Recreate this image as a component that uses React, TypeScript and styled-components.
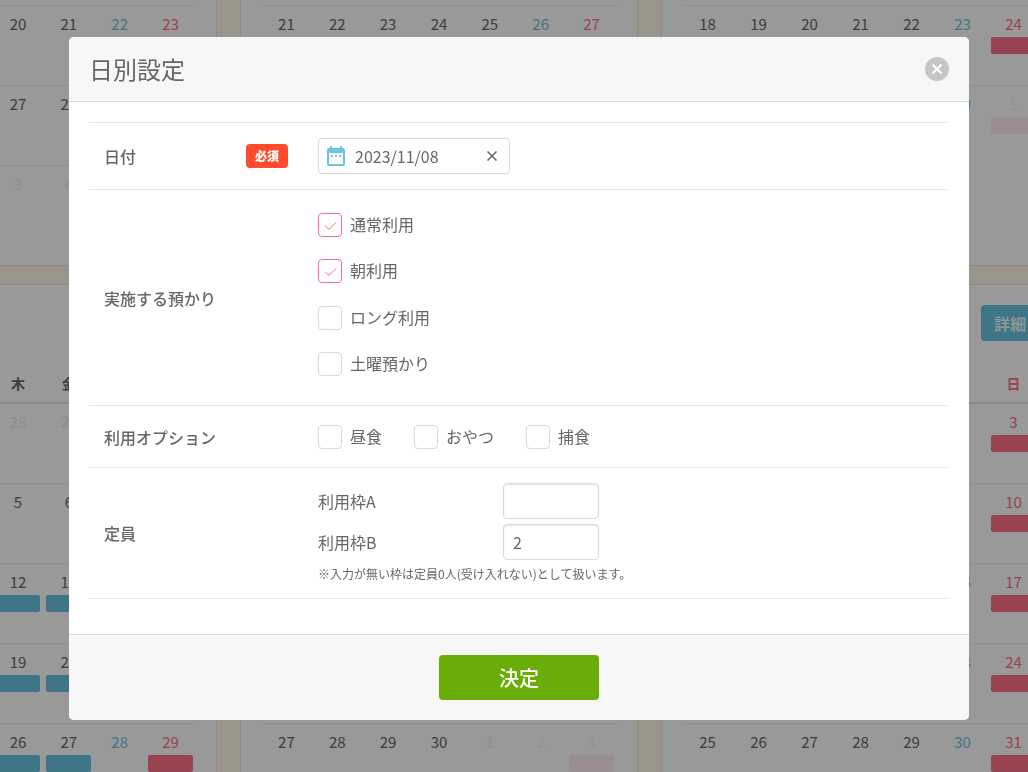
import React, { useState } from 'react';
import styled, { createGlobalStyle } from 'styled-components';
import { MdDateRange } from 'react-icons/md';

const BLUE = '#69c5e1';
const RED = '#fd7089';

const GlobalStyle = createGlobalStyle`
  *, *::before, *::after { box-sizing: border-box; }
  html, body { height: 100%; }
  body {
    margin: 0;
    overflow: hidden;
    background: #fff8e8;
    color: #666;
    font-family: "Noto Sans CJK JP", "Noto Sans", sans-serif;
    font-size: 16px;
    line-height: 24px;
  }
  button, input { font: inherit; color: inherit; }
`;

/* ---------- calendar behind the dialog ---------- */

const Year = styled.main`
  display: grid;
  grid-template-columns: 398px 398px 399px;
  gap: 18px 23px;
  height: 100vh;
  margin-left: -181px;
  overflow: hidden;
  align-content: start;
`;

const MonthCard = styled.section<{ $continued?: boolean }>`
  padding: ${(p) => (p.$continued ? '5px 20px 20px' : '20px')};
  background: #fff;
  border: 1px solid #ece6d8;
  border-top-width: ${(p) => (p.$continued ? '0' : '1px')};
`;

const MonthHead = styled.header`
  display: flex;
  justify-content: flex-end;
  margin-bottom: 23px;
`;

const DetailButton = styled.button`
  height: 36px;
  padding: 0 13px;
  border: 0;
  border-radius: 4px;
  background: ${BLUE};
  color: #fff;
  font-weight: 500;
`;

const MonthTable = styled.table`
  width: 100%;
  table-layout: fixed;
  border-spacing: 0;
  font-size: 15px;
  line-height: 22px;
`;

const dayColor = (col: number) => (col === 5 ? BLUE : col === 6 ? RED : '#666');

const WeekdayCell = styled.th<{ $col: number }>`
  height: 40px;
  padding: 0;
  border-bottom: 2px solid #e4e4e4;
  color: ${(p) => dayColor(p.$col)};
  font-size: 14px;
  font-weight: 700;
`;

const DayCell = styled.td<{ $col: number; $first: boolean }>`
  height: ${(p) => (p.$first ? '79px' : '80px')};
  padding: 7px 3px 0;
  border-top: ${(p) => (p.$first ? '0' : '1px solid #eee')};
  color: ${(p) => dayColor(p.$col)};
  text-align: center;
  vertical-align: top;
`;

const DayContent = styled.div<{ $outside: boolean }>`
  opacity: ${(p) => (p.$outside ? 0.12 : 1)};
`;

const Bar = styled.div<{ $color: string }>`
  height: 17px;
  margin-top: 2px;
  border-radius: 2px;
  background: ${(p) => p.$color};
`;

const WEEKDAYS = ['月', '火', '水', '木', '金', '土', '日'];

type Month = {
  name: string;
  lead: number;
  start: number;
  length: number;
  weeks: number;
  open?: number[];
  closed?: number[];
  continued?: boolean;
};

/* `start` is the first day number in the first listed row, `lead` the days of
   the previous month that come before it. Bars are keyed by cell index. */
const MONTHS: Month[] = [
  { name: '7月', lead: 0, start: 17, length: 31, weeks: 3, continued: true },
  { name: '8月', lead: 0, start: 21, length: 31, weeks: 2, continued: true },
  { name: '9月', lead: 0, start: 18, length: 30, weeks: 2, continued: true, closed: [6, 13] },
  { name: '10月', lead: 6, start: 1, length: 31, weeks: 5, open: [17, 18, 24, 25, 31, 32], closed: [6, 13, 20, 27, 34] },
  { name: '11月', lead: 2, start: 1, length: 30, weeks: 5, closed: [6, 13, 20, 27, 34] },
  { name: '12月', lead: 4, start: 1, length: 31, weeks: 5, closed: [6, 13, 20, 27, 34] },
];

const PREVIOUS_LENGTH: Record<string, number> = { '10月': 30, '11月': 31, '12月': 30 };

function dayAt(month: Month, index: number) {
  if (index < month.lead) {
    return { day: PREVIOUS_LENGTH[month.name] - month.lead + 1 + index, outside: true };
  }
  const day = month.start + index - month.lead;
  return day > month.length ? { day: day - month.length, outside: true } : { day, outside: false };
}

function MonthView({ month }: { month: Month }) {
  return (
    <MonthCard $continued={month.continued} aria-label={month.name}>
      {!month.continued && (
        <MonthHead>
          <DetailButton type="button">詳細</DetailButton>
        </MonthHead>
      )}
      <MonthTable>
        {!month.continued && (
          <thead>
            <tr>
              {WEEKDAYS.map((name, col) => (
                <WeekdayCell key={name} $col={col} scope="col">{name}</WeekdayCell>
              ))}
            </tr>
          </thead>
        )}
        <tbody>
          {Array.from({ length: month.weeks }, (_, week) => (
            <tr key={week}>
              {WEEKDAYS.map((name, col) => {
                const index = week * 7 + col;
                const { day, outside } = dayAt(month, index);
                return (
                  <DayCell key={name} $col={col} $first={week === 0 && !month.continued}>
                    <DayContent $outside={outside}>
                      {day}
                      {month.open?.includes(index) && <Bar $color={BLUE} />}
                      {month.closed?.includes(index) && <Bar $color={RED} />}
                    </DayContent>
                  </DayCell>
                );
              })}
            </tr>
          ))}
        </tbody>
      </MonthTable>
    </MonthCard>
  );
}

/* ---------- dialog ---------- */

const Overlay = styled.div`
  position: fixed;
  inset: 0;
  display: flex;
  justify-content: center;
  align-items: flex-start;
  padding: 37px 0 0 10px;
  overflow: auto;
  background: rgba(0, 0, 0, 0.4);
`;

const Dialog = styled.form`
  width: 100%;
  max-width: 900px;
  overflow: hidden;
  border-radius: 5px;
  background: #fff;
`;

const DialogHead = styled.header`
  display: flex;
  align-items: center;
  justify-content: space-between;
  height: 65px;
  padding: 0 20px;
  border-bottom: 1px solid #d9d9d9;
  background: #f7f7f7;
`;

const Title = styled.h1`
  margin: 0;
  font-size: 24px;
  line-height: 36px;
  font-weight: 400;
`;

const CloseButton = styled.button`
  display: grid;
  place-items: center;
  width: 24px;
  height: 24px;
  padding: 0;
  border: 0;
  border-radius: 50%;
  background: #c6c6c6;
`;

const DialogBody = styled.div`
  padding: 20px 20px 35px;
`;

const Row = styled.div`
  display: grid;
  grid-template-columns: 214px 1fr;
  align-items: center;
  border-bottom: 1px solid #e8e8e8;

  &:first-child { border-top: 1px solid #e8e8e8; }
`;

const RowLabel = styled.div`
  display: flex;
  align-items: center;
  justify-content: space-between;
  padding: 0 15px;
  font-weight: 500;
`;

const Required = styled.span`
  padding: 0 9px;
  border-radius: 4px;
  background: #ff4b2d;
  color: #fff;
  font-size: 12px;
  font-weight: 900;
`;

const RowContent = styled.div`
  padding: 15px;
`;

const DateField = styled.div`
  display: flex;
  align-items: center;
  gap: 7px;
  width: 192px;
  height: 36px;
  padding: 0 10px 0 5px;
  border: 1px solid #d9d9d9;
  border-radius: 4px;
`;

const CalendarIcon = styled(MdDateRange)`
  flex: none;
  color: ${BLUE};
`;

const DateInput = styled.input`
  flex: 1;
  min-width: 0;
  padding: 0;
  border: 0;
  outline: 0;
  background: none;
`;

const ClearButton = styled.button`
  display: grid;
  place-items: center;
  width: 14px;
  height: 14px;
  padding: 0;
  border: 0;
  background: none;
`;

const CheckList = styled.div`
  display: flex;
  flex-direction: column;
  justify-content: space-between;
  min-height: 185px;
  padding: 8px 0 14px;
`;

const CheckLine = styled.div`
  display: flex;
  flex-wrap: wrap;
  gap: 32px;
  padding: 4px 0 3px;
`;

const CheckLabel = styled.label`
  position: relative;
  display: flex;
  align-items: flex-start;
  gap: 8px;
  line-height: 22px;
`;

const CheckBox = styled.input`
  appearance: none;
  width: 24px;
  height: 24px;
  margin: 0;
  border: 1px solid #d9d9d9;
  border-radius: 4px;
  background: #fff;

  &:checked { border-color: ${RED}; }
  & + svg { display: none; }
  &:checked + svg { display: block; }
`;

const Tick = styled.svg`
  position: absolute;
  left: 0;
  top: 0;
  pointer-events: none;
`;

const Capacity = styled.div`
  display: grid;
  grid-template-columns: 185px 96px;
  align-items: center;
  margin-bottom: 5px;
`;

const CapacityInput = styled.input`
  width: 100%;
  height: 36px;
  padding: 0 9px;
  border: 1px solid #d9d9d9;
  border-radius: 4px;
  box-shadow: inset 0 1px 2px rgba(0, 0, 0, 0.1);
`;

const Note = styled.p`
  margin: 0;
  font-size: 12px;
  line-height: 18px;
`;

const DialogFoot = styled.footer`
  display: flex;
  justify-content: center;
  padding: 20px;
  border-top: 1px solid #d9d9d9;
  background: #f7f7f7;
`;

const SubmitButton = styled.button`
  width: 160px;
  height: 45px;
  padding: 0;
  border: 0;
  border-radius: 4px;
  background: #6aad08;
  color: #fff;
  font-size: 20px;
  font-weight: 500;
`;

function Check({ label, checked = false }: { label: string; checked?: boolean }) {
  return (
    <CheckLabel>
      <CheckBox type="checkbox" defaultChecked={checked} />
      <Tick width="24" height="24" viewBox="0 0 24 24" fill="none" stroke={RED} aria-hidden="true">
        <path d="M7.2 12.8 11 16.4 18.4 9.2" />
      </Tick>
      {label}
    </CheckLabel>
  );
}

export default function App() {
  const [date, setDate] = useState('2023/11/08');

  return (
    <>
      <GlobalStyle />
      <Year>
        {MONTHS.map((month) => (
          <MonthView key={month.name} month={month} />
        ))}
      </Year>
      <Overlay>
        <Dialog role="dialog" aria-labelledby="dialog-title" onSubmit={(e) => e.preventDefault()}>
          <DialogHead>
            <Title id="dialog-title">日別設定</Title>
            <CloseButton type="button" aria-label="閉じる">
              <svg width="10" height="10" viewBox="0 0 10 10" stroke="#fff" strokeWidth="2" aria-hidden="true">
                <path d="M0.6 0.6 9.4 9.4M9.4 0.6 0.6 9.4" />
              </svg>
            </CloseButton>
          </DialogHead>
          <DialogBody>
            <Row>
              <RowLabel>
                <label htmlFor="date">日付</label>
                <Required>必須</Required>
              </RowLabel>
              <RowContent>
                <DateField>
                  <CalendarIcon size={24} aria-hidden="true" />
                  <DateInput id="date" value={date} onChange={(e) => setDate(e.target.value)} />
                  <ClearButton type="button" aria-label="クリア" onClick={() => setDate('')}>
                    <svg width="10" height="10" viewBox="0 0 10 10" stroke="#666" strokeWidth="1.5" aria-hidden="true">
                      <path d="M0.5 0.5 9.5 9.5M9.5 0.5 0.5 9.5" />
                    </svg>
                  </ClearButton>
                </DateField>
              </RowContent>
            </Row>
            <Row role="group" aria-labelledby="care-label">
              <RowLabel id="care-label">実施する預かり</RowLabel>
              <RowContent>
                <CheckList>
                  <Check label="通常利用" checked />
                  <Check label="朝利用" checked />
                  <Check label="ロング利用" />
                  <Check label="土曜預かり" />
                </CheckList>
              </RowContent>
            </Row>
            <Row role="group" aria-labelledby="option-label">
              <RowLabel id="option-label">利用オプション</RowLabel>
              <RowContent>
                <CheckLine>
                  <Check label="昼食" />
                  <Check label="おやつ" />
                  <Check label="捕食" />
                </CheckLine>
              </RowContent>
            </Row>
            <Row role="group" aria-labelledby="capacity-label">
              <RowLabel id="capacity-label">定員</RowLabel>
              <RowContent>
                <Capacity>
                  <label htmlFor="capacity-a">利用枠A</label>
                  <CapacityInput id="capacity-a" inputMode="numeric" />
                </Capacity>
                <Capacity>
                  <label htmlFor="capacity-b">利用枠B</label>
                  <CapacityInput id="capacity-b" inputMode="numeric" defaultValue="2" />
                </Capacity>
                <Note>※入力が無い枠は定員0人(受け入れない)として扱います。</Note>
              </RowContent>
            </Row>
          </DialogBody>
          <DialogFoot>
            <SubmitButton type="submit">決定</SubmitButton>
          </DialogFoot>
        </Dialog>
      </Overlay>
    </>
  );
}
